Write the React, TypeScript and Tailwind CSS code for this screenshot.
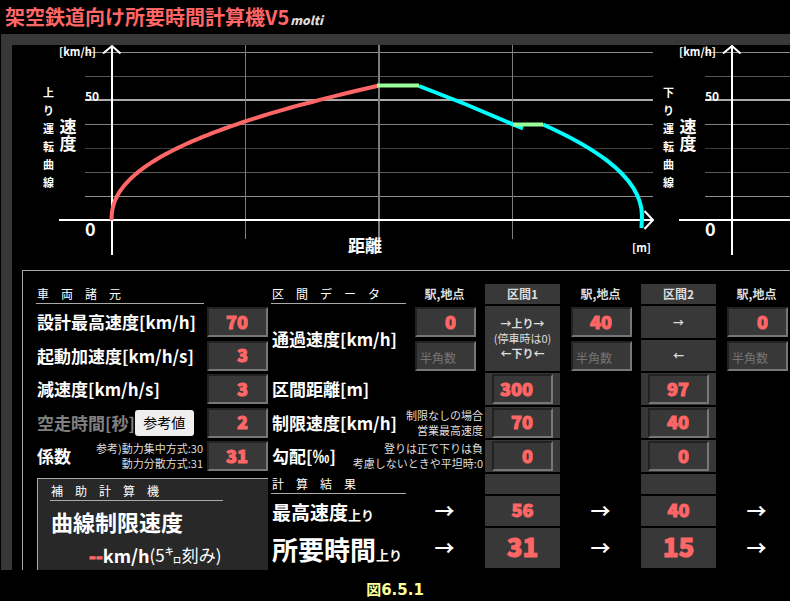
import React from "react";

const impact =
  "font-['Impact','Noto_Sans_CJK_JP',sans-serif] font-black text-[#ff6666] [-webkit-text-stroke:1px_#ff6666]";

const curve = (() => {
  const pts: string[] = [];
  for (let i = 0; i <= 60; i++) {
    const t = (i / 60) ** 2;
    pts.push(`${(71.5 + 268 * t).toFixed(1)},${(175 - 134.5 * t ** 0.447).toFixed(1)}`);
  }
  return pts.join(" ");
})();

const gridRows = [
  { y: 7.5, color: "#8a8a8a", w: 1 },
  { y: 31.5, color: "#555555", w: 1 },
  { y: 55, color: "#aaaaaa", w: 2 },
  { y: 79.5, color: "#808080", w: 1 },
  { y: 103.5, color: "#3c3c3c", w: 1 },
  { y: 127.5, color: "#5c5c5c", w: 1 },
  { y: 151.5, color: "#909090", w: 1 },
];

function Chart({ title, children }: { title: string; children?: React.ReactNode }) {
  return (
    <svg
      width="620"
      height="225"
      viewBox="0 0 620 225"
      className="block shrink-0 overflow-visible fill-white font-bold"
      role="img"
      aria-label={title}
    >
      {gridRows.map((g) => (
        <line key={g.y} x1="45" x2="613" y1={g.y} y2={g.y} stroke={g.color} strokeWidth={g.w} />
      ))}
      {[205.5, 339, 472.5].map((x) => (
        <line key={x} x1={x} x2={x} y1="0" y2="194" stroke="#7c7c7c" strokeWidth={x === 339 ? 2 : 1} />
      ))}
      <g fill="none" stroke="#ffffff" strokeWidth="2">
        <path d="M72 210V1M63 8.500L72 1L80.500 8.500" />
        <path d="M19 175H612M604.500 166L613 175L604.500 184" />
      </g>
      {children}
      <text x="19" y="11" fontSize="11">[km/h]</text>
      <text x="45" y="56" fontSize="12">50</text>
      {[...title].map((c, i) => (
        <text key={i} x="3" y={52 + i * 18} fontSize="11">{c}</text>
      ))}
      <text x="28" y="73" fontSize="17" writingMode="vertical-rl">速度</text>
      <text x="45" y="191" fontSize="18">0</text>
      <text x="308" y="207" fontSize="17">距離</text>
      <text x="592" y="207" fontSize="11">[m]</text>
    </svg>
  );
}

function NumberBox({ id, label, value }: { id?: string; label?: string; value?: string }) {
  return (
    <input
      id={id}
      aria-label={label}
      type="text"
      inputMode="numeric"
      defaultValue={value}
      placeholder="半角数"
      className={
        "block h-[30px] w-[61px] shrink-0 border-2 border-t-[#222222] border-r-[#777777] border-b-[#777777] border-l-[#222222] bg-[#383838] " +
        (value === undefined
          ? "pt-1 pl-[3px] text-left text-[12px] text-[#ff6666] placeholder:text-[#757575]"
          : "pr-[18px] pb-[3px] text-right text-[18px] leading-[22px] " + impact)
      }
    />
  );
}

function Heading({ children, className }: { children: string; className: string }) {
  return (
    <h2 className={"h-5 border-b border-[#aaaaaa] pl-px text-[12px] leading-5 font-normal whitespace-nowrap " + className}>
      {children}
    </h2>
  );
}

const label = "text-[17px] leading-6 font-bold whitespace-nowrap";
const section = "bg-[#383838] p-0 text-center";
const station = "p-0 text-center";
const boxWrap = "flex justify-end pr-[7px]";
const note = "text-right text-[11px] leading-[15px] whitespace-nowrap text-[#dddddd]";

const sections = [
  { name: "区間1", distance: "300", limit: "70", slope: "0", max: "56", time: "31" },
  { name: "区間2", distance: "97", limit: "40", slope: "0", max: "40", time: "15" },
];

function Specs() {
  return (
    <form className="flex w-[232px] shrink-0 flex-col pt-[13px]" onSubmit={(e) => e.preventDefault()}>
      <Heading className="mb-0.5 w-[168px]">車　両　諸　元</Heading>
      <div className="grid grid-cols-[1fr_61px] grid-rows-[32px_31px_32px_31px_32px] items-center gap-y-0.5 pl-px">
        <label htmlFor="vmax" className={label}>設計最高速度[km/h]</label>
        <NumberBox id="vmax" value="70" />
        <label htmlFor="acc" className={label}>起動加速度[km/h/s]</label>
        <NumberBox id="acc" value="3" />
        <label htmlFor="dec" className={label}>減速度[km/h/s]</label>
        <NumberBox id="dec" value="3" />
        <div className="flex items-center">
          <label htmlFor="idle" className={label + " text-[#808080]"}>空走時間[秒]</label>
          <button type="button" className="h-[26px] w-[59px] rounded-[3px] bg-[#efefef] text-[14px] whitespace-nowrap text-black">
            参考値
          </button>
        </div>
        <NumberBox id="idle" value="2" />
        <div className="flex items-center justify-between pr-1">
          <label htmlFor="coef" className={label}>係数</label>
          <p className={note}>参考)動力集中方式:30<br />動力分散方式:31</p>
        </div>
        <NumberBox id="coef" value="31" />
      </div>
      <section className="mt-1.5 ml-px flex-1 border-t border-l border-[#aaaaaa] bg-[#282828] px-3 pt-0.5">
        <Heading className="w-[173px]">補　助　計　算　機</Heading>
        <h3 className="mt-1.5 pl-px text-[22px] leading-7 font-bold">曲線制限速度</h3>
        <p className="mt-1.5 flex items-center pl-[39px] text-[17px] leading-7 whitespace-nowrap">
          <span className={"text-[18px] " + impact}>--</span>
          <b className="text-[18px]">km/h</b>(5㌔刻み)
        </p>
      </section>
    </form>
  );
}

function SectionTable() {
  return (
    <table className="mt-[11px] ml-px w-[528px] shrink-0 table-fixed border-separate border-spacing-[2px]">
      <colgroup>
        <col className="w-[133px]" />
        <col className="w-[77px]" />
        <col className="w-[75px]" />
        <col className="w-[77px]" />
        <col className="w-[75px]" />
        <col className="w-[77px]" />
      </colgroup>
      <tbody>
        <tr className="h-5 text-[12px] leading-5 text-[#dddddd]">
          <td className="p-0 text-white"><Heading className="w-[135px]">区　間　デ　ー　タ</Heading></td>
          <th className={station}>駅,地点</th>
          <th className={section}>区間1</th>
          <th className={station}>駅,地点</th>
          <th className={section}>区間2</th>
          <th className={station}>駅,地点</th>
        </tr>
        <tr className="h-8">
          <th rowSpan={2} className={"p-0 pl-px text-left " + label}>通過速度[km/h]</th>
          <td className={station}><div className={boxWrap}><NumberBox label="地点1 上り" value="0" /></div></td>
          <td rowSpan={2} className={section + " text-[11px] leading-[15px] whitespace-nowrap text-[#dddddd]"}>
            <b>→上り→</b><br />(停車時は0)<br /><b>←下り←</b>
          </td>
          <td className={station}><div className={boxWrap}><NumberBox label="地点2 上り" value="40" /></div></td>
          <td className={section + " text-[11px] font-bold text-[#dddddd]"}>→</td>
          <td className={station}><div className={boxWrap}><NumberBox label="地点3 上り" value="0" /></div></td>
        </tr>
        <tr className="h-[31px]">
          <td className={station}><div className={boxWrap}><NumberBox label="地点1 下り" /></div></td>
          <td className={station}><div className={boxWrap}><NumberBox label="地点2 下り" /></div></td>
          <td className={section + " text-[11px] font-bold text-[#dddddd]"}>←</td>
          <td className={station}><div className={boxWrap}><NumberBox label="地点3 下り" /></div></td>
        </tr>
        <tr className="h-8">
          <th colSpan={2} className={"p-0 pl-px text-left " + label}>区間距離[m]</th>
          {sections.map((s) => (
            <React.Fragment key={s.name}>
              <td className={section}><div className={boxWrap}><NumberBox label={s.name + " 距離"} value={s.distance} /></div></td>
              <td />
            </React.Fragment>
          ))}
        </tr>
        <tr className="h-[31px]">
          <th colSpan={2} className="p-0 pl-px">
            <div className="flex items-center justify-between">
              <span className={label}>制限速度[km/h]</span>
              <span className={"font-normal " + note}>制限なしの場合<br />営業最高速度</span>
            </div>
          </th>
          {sections.map((s) => (
            <React.Fragment key={s.name}>
              <td className={section}><div className={boxWrap}><NumberBox label={s.name + " 制限速度"} value={s.limit} /></div></td>
              <td />
            </React.Fragment>
          ))}
        </tr>
        <tr className="h-8">
          <th colSpan={2} className="p-0 pl-px">
            <div className="flex items-center justify-between">
              <span className={label}>勾配[‰]</span>
              <span className={"font-normal " + note}>登りは正で下りは負<br />考慮しないときや平坦時:0</span>
            </div>
          </th>
          {sections.map((s) => (
            <React.Fragment key={s.name}>
              <td className={section}><div className={boxWrap}><NumberBox label={s.name + " 勾配"} value={s.slope} /></div></td>
              <td />
            </React.Fragment>
          ))}
        </tr>
        <tr className="h-5">
          <td colSpan={2} className="p-0"><Heading className="w-[135px]">計　算　結　果</Heading></td>
          <td className={section} />
          <td />
          <td className={section} />
          <td />
        </tr>
        <tr className="h-[30px] leading-6">
          <th className="p-0 pt-0.5 pl-px text-left text-[19px] whitespace-nowrap">最高速度<span className="text-[13px] leading-none">上り</span></th>
          <td className={station + " text-[20px] font-bold"}>→</td>
          {sections.map((s) => (
            <React.Fragment key={s.name}>
              <td className={section + " pb-1 text-[18px] " + impact}>{s.max}</td>
              <td className={station + " text-[20px] font-bold"}>→</td>
            </React.Fragment>
          ))}
        </tr>
        <tr className="h-10 leading-8">
          <th className="p-0 pt-0.5 pl-px text-left text-[26px] whitespace-nowrap">所要時間<span className="text-[13px] leading-none">上り</span></th>
          <td className={station + " text-[20px] font-bold"}>→</td>
          {sections.map((s) => (
            <React.Fragment key={s.name}>
              <td className={section + " pb-1 text-[26px] " + impact}>{s.time}</td>
              <td className={station + " text-[20px] font-bold"}>→</td>
            </React.Fragment>
          ))}
        </tr>
      </tbody>
    </table>
  );
}

export default function App() {
  return (
    <figure className="min-h-screen overflow-hidden bg-black font-['Noto_Sans_CJK_JP',sans-serif] text-white">
      <h1 className="flex h-[34px] items-baseline gap-px pl-[5px] text-[20px] leading-[34px] font-bold whitespace-nowrap text-[#ff6666]">
        架空鉄道向け所要時間計算機V5
        <span className="font-['Impact','Noto_Sans_CJK_JP',sans-serif] text-[12px] font-black text-[#dddddd] italic">molti</span>
      </h1>
      <main className="ml-px overflow-hidden border-t-[11px] border-l-[11px] border-[#383838]">
        <div className="flex pl-7">
          <Chart title="上り運転曲線">
            <g fill="none" strokeWidth="4">
              <polyline points={curve} stroke="#ff6666" />
              <path d="M379 41Q427 59 473 79.500L483 83.500" stroke="#00ffff" />
              <path d="M503 79.500C542 97 602 128 602 171L601.500 183" stroke="#00ffff" />
              <path d="M337 40.500H379M473 79.500H503" stroke="#99ff99" />
            </g>
          </Chart>
          <Chart title="下り運転曲線" />
        </div>
        <div className="ml-2.5 flex border-t border-l border-[#aaaaaa] pl-[13px]">
          <Specs />
          <SectionTable />
        </div>
      </main>
      <figcaption className="pt-2 text-center font-['DejaVu_Sans','Noto_Sans_CJK_JP',sans-serif] text-[15px] leading-6 font-bold text-[#ffff99]">
        図6.5.1
      </figcaption>
    </figure>
  );
}
